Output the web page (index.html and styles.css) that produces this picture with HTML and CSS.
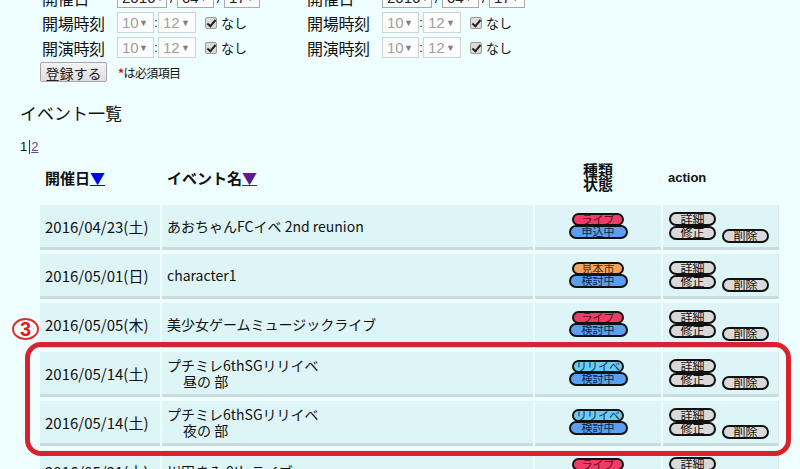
FILE: index.html
```html
<!DOCTYPE html>
<html lang="ja">
<head>
<meta charset="utf-8">
<title>イベント一覧</title>
<link rel="stylesheet" href="styles.css">
</head>
<body>
<div class="page">
  <form class="entry">
    <div class="grid">
      <div class="field"><span class="label">開催日</span><span class="sel w50 on">2016<i>▼</i></span><span class="sep">/</span><span class="sel w37 on">04<i>▼</i></span><span class="sep">/</span><span class="sel w36 on">17<i>▼</i></span></div>
      <div class="field"><span class="label">開催日</span><span class="sel w50 on">2016<i>▼</i></span><span class="sep">/</span><span class="sel w37 on">04<i>▼</i></span><span class="sep">/</span><span class="sel w36 on">17<i>▼</i></span></div>
      <div class="field"><span class="label">開場時刻</span><span class="sel w37">10<i>▼</i></span><span class="colon">:</span><span class="sel w38">12<i>▼</i></span><span class="chk"></span><span class="nashi">なし</span></div>
      <div class="field"><span class="label">開場時刻</span><span class="sel w37">10<i>▼</i></span><span class="colon">:</span><span class="sel w38">12<i>▼</i></span><span class="chk"></span><span class="nashi">なし</span></div>
      <div class="field"><span class="label">開演時刻</span><span class="sel w37">10<i>▼</i></span><span class="colon">:</span><span class="sel w38">12<i>▼</i></span><span class="chk"></span><span class="nashi">なし</span></div>
      <div class="field"><span class="label">開演時刻</span><span class="sel w37">10<i>▼</i></span><span class="colon">:</span><span class="sel w38">12<i>▼</i></span><span class="chk"></span><span class="nashi">なし</span></div>
    </div>
    <div class="submit-row"><button type="button" class="submit">登録する</button><span class="req"><b>*</b>は必須項目</span></div>
  </form>

  <h3 class="title">イベント一覧</h3>
  <div class="pager">1<span class="bar"></span><a href="#" class="pg">2</a></div>

  <table class="events">
    <thead>
      <tr>
        <th class="c-date">開催日<a href="#" class="sort">▼</a></th>
        <th class="c-name">イベント名<a href="#" class="sort visited">▼</a></th>
        <th class="c-kind">種類<br>状態</th>
        <th class="c-act">action</th>
      </tr>
    </thead>
    <tbody>
      <tr>
        <td class="c-date">2016/04/23(土)</td>
        <td class="c-name">あおちゃんFCイベ 2nd reunion</td>
        <td class="c-kind"><span class="kind live">ライブ</span><span class="state">申込中</span></td>
        <td class="c-act"><div class="acts"><span class="btn">詳細</span><span class="btn">修正</span><span class="btn del">削除</span></div></td>
      </tr>
      <tr>
        <td class="c-date">2016/05/01(日)</td>
        <td class="c-name">character1</td>
        <td class="c-kind"><span class="kind fair">見本市</span><span class="state">検討中</span></td>
        <td class="c-act"><div class="acts"><span class="btn">詳細</span><span class="btn">修正</span><span class="btn del">削除</span></div></td>
      </tr>
      <tr>
        <td class="c-date">2016/05/05(木)</td>
        <td class="c-name">美少女ゲームミュージックライブ</td>
        <td class="c-kind"><span class="kind live">ライブ</span><span class="state">検討中</span></td>
        <td class="c-act"><div class="acts"><span class="btn">詳細</span><span class="btn">修正</span><span class="btn del">削除</span></div></td>
      </tr>
      <tr>
        <td class="c-date">2016/05/14(土)</td>
        <td class="c-name">プチミレ6thSGリリイベ<br><span class="sub">昼の 部</span></td>
        <td class="c-kind"><span class="kind rel">リリイベ</span><span class="state">検討中</span></td>
        <td class="c-act"><div class="acts"><span class="btn">詳細</span><span class="btn">修正</span><span class="btn del">削除</span></div></td>
      </tr>
      <tr>
        <td class="c-date">2016/05/14(土)</td>
        <td class="c-name">プチミレ6thSGリリイベ<br><span class="sub">夜の 部</span></td>
        <td class="c-kind"><span class="kind rel">リリイベ</span><span class="state">検討中</span></td>
        <td class="c-act"><div class="acts"><span class="btn">詳細</span><span class="btn">修正</span><span class="btn del">削除</span></div></td>
      </tr>
      <tr>
        <td class="c-date">2016/05/21(土)</td>
        <td class="c-name">川田まみ 9th ライブ</td>
        <td class="c-kind"><span class="kind live">ライブ</span><span class="state">申込中</span></td>
        <td class="c-act"><div class="acts"><span class="btn">詳細</span><span class="btn">修正</span><span class="btn del">削除</span></div></td>
      </tr>
    </tbody>
  </table>

  <div class="mark-box"></div>
  <div class="mark-num">3</div>
</div>
</body>
</html>
```

FILE: styles.css
```css
html, body {
  margin: 0;
  padding: 0;
  background: #effeff;
  color: #111;
  font-family: "Liberation Sans", "Noto Sans CJK JP", sans-serif;
  overflow: hidden;
}
.page {
  position: relative;
  padding: 0 0 0 20px;
  margin-top: -15px;
}
.entry {
  margin-left: 20px;
}
.grid {
  display: grid;
  grid-template-columns: 265px 265px;
  grid-auto-rows: 25px;
}
.field {
  display: flex;
  align-items: center;
  font-size: 16px;
  padding-left: 2px;
}
.label {
  width: 75px;
  font-family: "Noto Sans CJK JP", sans-serif;
  font-size: 16px;
  letter-spacing: -0.3px;
  line-height: 20px;
}
.sel {
  box-sizing: border-box;
  display: inline-flex;
  align-items: center;
  justify-content: space-between;
  height: 21px;
  padding: 0 5px 0 4px;
  border: 1px solid #cfd3d3;
  background: #fdfdfd;
  color: #a0a0a0;
  font-size: 15px;
}
.sel.on { color: #222; border-color: #a9a9a9; }
.sel i { font-style: normal; font-size: 9px; color: #808080; }
.sel.on i { color: #333; }
.w50 { width: 50px; }
.w37 { width: 37px; }
.w38 { width: 38px; }
.w36 { width: 36px; }
.sep { width: 10px; text-align: center; font-size: 14px; }
.colon { width: 4px; text-align: center; font-size: 13px; }
.chk {
  box-sizing: border-box;
  width: 12px;
  height: 12px;
  margin-left: 9px;
  border: 1px solid #9a9a9a;
  border-radius: 2px;
  background: #dcdcdc;
  position: relative;
}
.chk::after {
  content: "";
  position: absolute;
  left: 3px;
  top: 0px;
  width: 3px;
  height: 7px;
  border: solid #222;
  border-width: 0 2px 2px 0;
  transform: rotate(40deg);
}
.nashi {
  margin-left: 4px;
  font-family: "Noto Sans CJK JP", sans-serif;
  font-size: 13px;
}
.submit-row {
  display: flex;
  align-items: center;
  height: 24px;
}
.submit {
  box-sizing: border-box;
  width: 67px;
  height: 20px;
  padding: 0;
  border: 1px solid #a6a6a6;
  border-radius: 2px;
  background: linear-gradient(#f3f3f3, #dedede);
  font-family: "Noto Sans CJK JP", sans-serif;
  font-size: 14px;
  color: #222;
}
.req {
  margin-left: 11px;
  font-family: "Noto Sans CJK JP", sans-serif;
  font-size: 12px;
  letter-spacing: -0.6px;
}
.req b { color: #d0102a; font-weight: bold; }
.title {
  margin: 17px 0 0 0;
  font-family: "Noto Sans CJK JP", sans-serif;
  font-size: 17px;
  font-weight: normal;
  line-height: 24px;
}
.pager {
  margin-top: 14px;
  font-size: 13px;
  line-height: 16px;
  display: flex;
  align-items: center;
}
.bar {
  display: inline-block;
  width: 1px;
  height: 14px;
  background: #333;
  margin: 0 1px 0 2px;
}
.pg { color: #6a4a8a; }
.events {
  margin-left: 18px;
  margin-top: 4px;
  border-spacing: 2px 4px;
  font-family: "Noto Sans CJK JP", sans-serif;
}
.events th {
  font-size: 15px;
  font-weight: bold;
  text-align: left;
  padding: 0 0 10px 5px;
  height: 24px;
  vertical-align: middle;
}
.events th.c-kind {
  text-align: center;
  line-height: 14px;
  padding: 0 0 10px 0;
}
.events th.c-act {
  font-family: "Liberation Sans", sans-serif;
  font-size: 13px;
  padding-left: 5px;
}
.sort { color: #0000ee; text-decoration: underline; font-size: 15px; }
.sort.visited { color: #5b1a8e; }
.events td {
  background: #ddf5f7;
  border-bottom: 3px solid #c9dcdf;
  height: 42px;
  padding: 0;
  font-size: 14px;
  vertical-align: middle;
}
.events td.c-date {
  width: 115px;
  padding-left: 5px;
  font-size: 15px;
}
.events td.c-name {
  width: 366px;
  padding-left: 5px;
  line-height: 16px;
}
.sub { padding-left: 16px; }
.events td.c-kind {
  width: 126px;
  text-align: center;
  font-size: 0;
}
.events td.c-act {
  width: 109px;
  padding-left: 6px;
  border-right: 1px solid #d4e6e8;
}
.acts {
  display: grid;
  grid-template-columns: 47px 47px;
  column-gap: 6px;
}
.acts .btn:first-child { grid-column: 1 / 2; grid-row: 1; }
.kind, .state {
  box-sizing: border-box;
  display: block;
  margin: 0 auto;
  border: 2px solid #111;
  border-radius: 8px;
  font-size: 11px;
  line-height: 9px;
  text-align: center;
}
.kind {
  width: 52px;
  height: 13px;
  color: #5a0d20;
}
.state {
  width: 59px;
  height: 14px;
  margin-top: -1px;
  background: #5b9ff0;
  color: #0a1f4a;
}
.live { background: #ee3c66; }
.fair { background: #f6a45c; color: #5a2a00; }
.rel { background: #66cff0; color: #0a2a5a; }
.btn {
  box-sizing: border-box;
  display: flex;
  align-items: center;
  justify-content: center;
  width: 47px;
  height: 14px;
  border: 2px solid #111;
  border-radius: 8px;
  background: #d9d9d9;
  font-size: 12px;
  line-height: 10px;
  color: #111;
}
.acts .btn:nth-child(2) { grid-column: 1; grid-row: 2; }
.btn.del {
  grid-column: 2;
  grid-row: 2;
  position: relative;
  top: 3px;
}
.mark-box {
  position: absolute;
  left: 25px;
  top: 357px;
  width: 766px;
  height: 114px;
  box-sizing: border-box;
  border: 5px solid #d8222e;
  border-radius: 16px;
}
.mark-num {
  position: absolute;
  left: 12px;
  top: 333px;
  width: 27px;
  height: 22px;
  box-sizing: border-box;
  border: 2px solid #e03030;
  border-radius: 50%;
  background: #fff;
  color: #e01a1a;
  font-family: "Liberation Sans", sans-serif;
  font-weight: bold;
  font-size: 20px;
  line-height: 18px;
  text-align: center;
}
```
